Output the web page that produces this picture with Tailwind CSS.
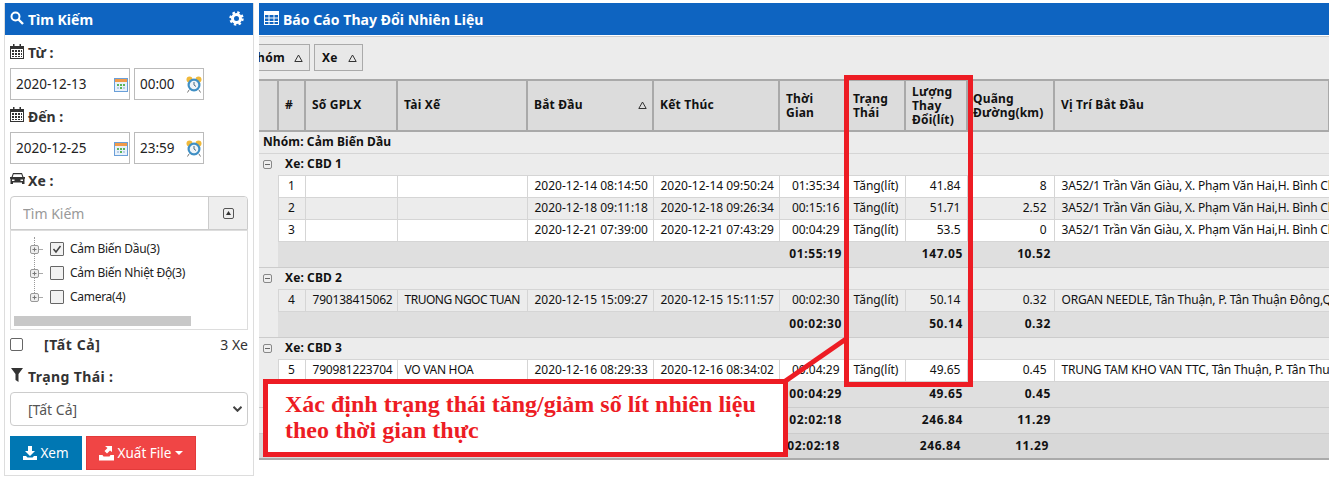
<!DOCTYPE html>
<html lang="vi">
<head>
  <meta charset="UTF-8">
  <title>Báo Cáo Thay Đổi Nhiên Liệu</title>
  <script src="https://cdn.jsdelivr.net/npm/@tailwindcss/browser@4"></script>
</head>
<body class="relative w-[1329px] h-[478px] overflow-hidden bg-white flex font-['Noto_Sans',sans-serif] text-[#333]">

  <!-- search panel -->
  <aside class="ml-[4px] mt-[3px] w-[250px] h-[473px] border-x border-b border-[#ddd] flex flex-col shrink-0">
    <div class="h-[32px] bg-[#0e64c1] text-white flex items-center pl-[5px] pr-[9px] gap-[4px] font-bold text-[14px]">
      <svg class="w-[14px] h-[14px] -mt-[2px]" viewBox="0 0 14 14" fill="none" stroke="white"><circle cx="5.500" cy="5.500" r="4" stroke-width="2"/><path d="M8.500 8.500L13 13" stroke-width="2.400"/></svg>
      <span class="flex-1">Tìm Kiếm</span>
      <svg class="w-[15px] h-[15px] -mt-[2px]" viewBox="0 0 15 15" fill="none" stroke="white"><circle cx="7.500" cy="7.500" r="4" stroke-width="3"/><circle cx="7.500" cy="7.500" r="6" stroke-width="2.400" stroke-dasharray="2.400 2.310"/></svg>
    </div>
    <div class="px-[5px] flex flex-col">
      <label class="h-[33px] pt-[2px] flex items-center gap-[4px] font-bold text-[14px]">
        <svg class="w-[14px] h-[15px] text-[#333] -mt-[3px]" viewBox="0 0 14 15" fill="currentColor"><path d="M3 0h1.500v2h5V0H11v2h3v13H0V2h3zM1 5v9h12V5zM2 6h2v2H2zm3 0h2v2H5zm3 0h2v2H8zm3 0h1v2h-1zM2 9h2v2H2zm3 0h2v2H5zm3 0h2v2H8zm3 0h1v2h-1zM2 12h2v1H2zm3 0h2v1H5zm3 0h2v1H8zm3 0h1v1h-1z"/></svg>
        Từ :
      </label>
      <div class="flex gap-[4px]">
        <div class="relative w-[120px] h-[32px] border border-[#bbb]">
          <input class="w-full h-full pl-[5px] text-[13.5px] text-[#222] outline-none" value="2020-12-13">
          <svg class="absolute right-[1px] top-[9px] w-[14px] h-[14px]" viewBox="0 0 14 14"><rect x="0.500" y="0.500" width="13" height="13" fill="#e8f1fb" stroke="#6a9fd8"/><rect x="1" y="1" width="12" height="3" fill="#f09a4a"/><path d="M3 6h2v2H3zm3 0h2v2H6zM6 9h2v2H6zm3-3h2v2H9z" fill="#5ab55a"/><path d="M3 9h2v2H3zm6 0h2v2H9z" fill="#b8cde6"/></svg>
        </div>
        <div class="relative w-[70px] h-[32px] border border-[#bbb]">
          <input class="w-full h-full pl-[5px] text-[13.5px] text-[#222] outline-none" value="00:00">
          <svg class="absolute right-[1px] top-[7px] w-[16px] h-[17px]" viewBox="0 0 16 17"><circle cx="3.500" cy="3.500" r="3" fill="#f0b93a"/><circle cx="12.500" cy="3.500" r="3" fill="#f0b93a"/><path d="M3 14l-1.500 2.500M13 14l1.500 2.500" stroke="#777"/><circle cx="8" cy="9" r="6.500" fill="#3f8fc4"/><circle cx="8" cy="9" r="4.300" fill="#eef4f8"/><path d="M8 6v3l2 1.500" stroke="#4b6a80" fill="none"/></svg>
        </div>
      </div>
      <label class="h-[32px] flex items-center gap-[4px] font-bold text-[14px]">
        <svg class="w-[14px] h-[15px] text-[#333] -mt-[3px]" viewBox="0 0 14 15" fill="currentColor"><path d="M3 0h1.500v2h5V0H11v2h3v13H0V2h3zM1 5v9h12V5zM2 6h2v2H2zm3 0h2v2H5zm3 0h2v2H8zm3 0h1v2h-1zM2 9h2v2H2zm3 0h2v2H5zm3 0h2v2H8zm3 0h1v2h-1zM2 12h2v1H2zm3 0h2v1H5zm3 0h2v1H8zm3 0h1v1h-1z"/></svg>
        Đến :
      </label>
      <div class="flex gap-[4px]">
        <div class="relative w-[120px] h-[32px] border border-[#bbb]">
          <input class="w-full h-full pl-[5px] text-[13.5px] text-[#222] outline-none" value="2020-12-25">
          <svg class="absolute right-[1px] top-[9px] w-[14px] h-[14px]" viewBox="0 0 14 14"><rect x="0.500" y="0.500" width="13" height="13" fill="#e8f1fb" stroke="#6a9fd8"/><rect x="1" y="1" width="12" height="3" fill="#f09a4a"/><path d="M3 6h2v2H3zm3 0h2v2H6zM6 9h2v2H6zm3-3h2v2H9z" fill="#5ab55a"/><path d="M3 9h2v2H3zm6 0h2v2H9z" fill="#b8cde6"/></svg>
        </div>
        <div class="relative w-[70px] h-[32px] border border-[#bbb]">
          <input class="w-full h-full pl-[5px] text-[13.5px] text-[#222] outline-none" value="23:59">
          <svg class="absolute right-[1px] top-[7px] w-[16px] h-[17px]" viewBox="0 0 16 17"><circle cx="3.500" cy="3.500" r="3" fill="#f0b93a"/><circle cx="12.500" cy="3.500" r="3" fill="#f0b93a"/><path d="M3 14l-1.500 2.500M13 14l1.500 2.500" stroke="#777"/><circle cx="8" cy="9" r="6.500" fill="#3f8fc4"/><circle cx="8" cy="9" r="4.300" fill="#eef4f8"/><path d="M8 6v3l2 1.500" stroke="#4b6a80" fill="none"/></svg>
        </div>
      </div>
      <label class="h-[32px] flex items-center gap-[3px] font-bold text-[14px]">
        <svg class="w-[15px] h-[12px] text-[#333] -mt-[3px]" viewBox="0 0 15 12" fill="currentColor"><path d="M3 0h9l1.500 4H15v1.500l-.5.5v5h-2.500v-1.500H3V11H.5V6L0 5.500V4h1.500zM3.600 1.300L2.700 4h9.600l-.9-2.700zM2 6.500v1.500h2.500V6.500zm8.500 0v1.500H13V6.500z"/></svg>
        Xe :
      </label>
      <div class="flex h-[34px] border border-[#ccc] rounded-t-[4px] overflow-hidden">
        <input class="flex-1 min-w-0 pl-[12px] text-[14px] outline-none placeholder:text-[#999]" placeholder="Tìm Kiếm">
        <button class="w-[39px] bg-[#eee] border-l border-[#ccc] flex items-center justify-center">
          <svg class="w-[11px] h-[11px]" viewBox="0 0 11 11"><rect x="0.500" y="0.500" width="10" height="10" rx="1.500" fill="none" stroke="#555"/><path d="M5.500 3L8 7H3z" fill="#333"/></svg>
        </button>
      </div>
      <div class="relative h-[100px] border border-[#ddd] text-[12px] text-[#222] tracking-[-0.28px]">
        <div class="absolute left-[23px] top-[6px] h-[60px] border-l border-dotted border-[#999]"></div>
        <div class="pt-[6px] flex flex-col">
          <div class="relative h-[24px] flex items-center pl-[39px] gap-[6px]">
            <svg class="absolute left-[19px] top-[8px] w-[14px] h-[9px]" viewBox="0 0 14 9"><rect x="0.500" y="0.500" width="8" height="8" rx="1.500" fill="#eee" stroke="#999"/><path d="M2.500 4.500h4M4.500 2.500v4" stroke="#777"/><path d="M9 4.500h4" stroke="#aaa"/></svg>
            <span class="w-[14px] h-[14px] border border-[#666] rounded-[1px] bg-[#f2f2f2] flex items-center justify-center"><svg class="w-[10px] h-[10px]" viewBox="0 0 10 10" fill="none" stroke="#444" stroke-width="1.500"><path d="M1.500 5l2.500 3 4.500-6"/></svg></span>
            <span>Cảm Biến Dầu(3)</span>
          </div>
          <div class="relative h-[24px] flex items-center pl-[39px] gap-[6px]">
            <svg class="absolute left-[19px] top-[8px] w-[14px] h-[9px]" viewBox="0 0 14 9"><rect x="0.500" y="0.500" width="8" height="8" rx="1.500" fill="#eee" stroke="#999"/><path d="M2.500 4.500h4M4.500 2.500v4" stroke="#777"/><path d="M9 4.500h4" stroke="#aaa"/></svg>
            <span class="w-[14px] h-[14px] border border-[#666] rounded-[1px] bg-[#f2f2f2]"></span>
            <span>Cảm Biến Nhiệt Độ(3)</span>
          </div>
          <div class="relative h-[24px] flex items-center pl-[39px] gap-[6px]">
            <svg class="absolute left-[19px] top-[8px] w-[14px] h-[9px]" viewBox="0 0 14 9"><rect x="0.500" y="0.500" width="8" height="8" rx="1.500" fill="#eee" stroke="#999"/><path d="M2.500 4.500h4M4.500 2.500v4" stroke="#777"/><path d="M9 4.500h4" stroke="#aaa"/></svg>
            <span class="w-[14px] h-[14px] border border-[#666] rounded-[1px] bg-[#f2f2f2]"></span>
            <span>Camera(4)</span>
          </div>
        </div>
        <div class="absolute left-[3px] top-[85px] w-[177px] h-[10px] bg-[#c8c8c8]"></div>
      </div>
      <div class="h-[30px] pb-[2px] flex items-center text-[14px]">
        <span class="w-[13px] h-[13px] border border-[#666] rounded-[2px]"></span>
        <span class="ml-[21px] flex-1 font-bold tracking-[0.6px]">[Tất Cả]</span>
        <span>3 Xe</span>
      </div>
      <label class="h-[32px] flex items-center gap-[5px] pl-[1px] font-bold text-[14px] tracking-[0.4px]">
        <svg class="w-[12px] h-[14px] text-[#333] -mt-[3px]" viewBox="0 0 12 14" fill="currentColor"><path d="M0 0h12L7.500 6v8l-3-2V6z"/></svg>
        Trạng Thái :
      </label>
      <div class="relative h-[34px]">
        <select class="w-full h-full appearance-none border border-[#ccc] rounded-[4px] pl-[17px] text-[14px] text-[#555] outline-none bg-white">
          <option>[Tất Cả]</option>
        </select>
        <svg class="absolute right-[6px] top-[14px] w-[9px] h-[6px]" viewBox="0 0 9 6" fill="none" stroke="#444" stroke-width="2"><path d="M0.500 0.800L4.500 4.800 8.500 0.800"/></svg>
      </div>
      <div class="mt-[10px] flex gap-[4px]">
        <button class="w-[72px] h-[34px] bg-[#0077b3] text-white text-[13.5px] flex items-center justify-center gap-[3px]">
          <svg class="w-[14px] h-[14px]" viewBox="0 0 14 14" fill="white"><path d="M5 0h4v5h3L7 10 2 5h3zM0 10h3l1.500 1.500h5L11 10h3v4H0z"/></svg>
          Xem
        </button>
        <button class="w-[110px] h-[34px] bg-[#f04545] border border-[#e33a3a] text-white text-[13.5px] flex items-center justify-center gap-[4px]">
          <svg class="w-[15px] h-[15px]" viewBox="0 0 15 15" fill="white"><path d="M6 0h7v6l-2-1.500L8 7.500 5.500 5 8.500 2zM0 9h3.500l1 1.500h6l1-1.500H15v5.500H0z"/></svg>
          Xuất File
          <span class="w-0 h-0 border-x-[4px] border-x-transparent border-t-[4px] border-t-white"></span>
        </button>
      </div>
    </div>
  </aside>

  <!-- report panel -->
  <main class="ml-[5px] mt-[3px] flex-1 min-w-0 overflow-hidden text-[#111]">
    <div class="h-[32px] bg-[#0e64c1] text-white flex items-center pl-[5px] gap-[4px] font-bold text-[14px] tracking-[0.05px]">
      <svg class="w-[15px] h-[14px] -mt-[2px]" viewBox="0 0 15 14" fill="none" stroke="white"><rect x="0.500" y="0.500" width="14" height="13"/><path d="M0 3.500h15M0 7h15M0 10.500h15M5 3.500V14M10 3.500V14" stroke-width="1"/><rect x="0.500" y="0.500" width="14" height="3" fill="white"/></svg>
      Báo Cáo Thay Đổi Nhiên Liệu
    </div>
    <div class="h-[43px] mt-[1px] bg-[#ececec] border-t border-[#ccc] flex items-start pt-[7px] gap-[4px] font-bold text-[12px] tracking-[0.3px]">
      <span class="-ml-[20px] w-[71px] h-[27px] border border-[#aaa] bg-[#e8e8e8] flex items-center justify-end pr-[6px] gap-[9px]">Nhóm
        <svg class="w-[9px] h-[8px]" viewBox="0 0 9 8" fill="none" stroke="#333"><path d="M4.500 1L8.200 7.500H0.800z"/></svg></span>
      <span class="w-[49px] h-[27px] border border-[#aaa] bg-[#e8e8e8] flex items-center pl-[7px] gap-[10px]">Xe
        <svg class="w-[9px] h-[8px]" viewBox="0 0 9 8" fill="none" stroke="#333"><path d="M4.500 1L8.200 7.500H0.800z"/></svg></span>
    </div>

    <table class="table-fixed border-collapse w-[1070px] text-[12px] [&_td]:overflow-hidden [&_td]:whitespace-nowrap [&_th]:overflow-hidden">
      <colgroup>
        <col class="w-[19px]"><col class="w-[27px]"><col class="w-[92px]"><col class="w-[130px]"><col class="w-[126px]"><col class="w-[126px]"><col class="w-[68px]"><col class="w-[58px]"><col class="w-[62px]"><col class="w-[87px]"><col class="w-[275px]">
      </colgroup>
      <thead>
        <tr class="h-[51px] bg-[#dcdcdc] font-bold text-left leading-[14px] tracking-[0.2px] [&>th]:border-[2px] [&>th]:border-[#a9a9a9] [&>th]:pl-[6px] [&>th]:pb-[2px] [&>th]:font-bold">
          <th class="!border-l-0"></th>
          <th>#</th>
          <th>Số GPLX</th>
          <th>Tài Xế</th>
          <th>
            <div class="flex items-center justify-between pr-[5px]">Bắt Đầu
              <svg class="w-[9px] h-[8px]" viewBox="0 0 9 8" fill="none" stroke="#333"><path d="M4.500 1L8.200 7.500H0.800z"/></svg>
            </div>
          </th>
          <th>Kết Thúc</th>
          <th class="!pb-0">Thời<br>Gian</th>
          <th class="!pl-[5px] !pb-0">Trạng<br>Thái</th>
          <th class="!pb-0">Lượng<br>Thay<br>Đổi(lít)</th>
          <th class="!pl-[5px] !pb-0">Quãng<br>Đường(km)</th>
          <th>Vị Trí Bắt Đầu</th>
        </tr>
      </thead>
      <tbody>
        <tr class="h-[22px] bg-[#ececec] font-bold border-b border-[#d5d5d5]">
          <td colspan="11" class="pl-[4px] tracking-[0.1px]">Nhóm: Cảm Biến Dầu</td>
        </tr>

        <tr class="h-[22px] bg-[#ececec] font-bold">
          <td class="pl-[4px]"><svg class="w-[9px] h-[9px]" viewBox="0 0 9 9"><rect x="0.500" y="0.500" width="8" height="8" rx="1.500" fill="#eee" stroke="#888"/><path d="M2 4.500h5" stroke="#666"/></svg></td>
          <td colspan="10" class="pl-[7px] tracking-[0.1px]">Xe: CBD 1</td>
        </tr>
        <tr class="h-[22px] bg-white [&>td]:border [&>td]:border-[#d5d5d5] [&>td]:px-[7px]">
          <td class="!bg-[#ececec] !border-0"></td><td class="text-center">1</td><td></td><td></td><td>2020-12-14 08:14:50</td><td>2020-12-14 09:50:24</td><td class="text-right">01:35:34</td><td class="!pl-[6px]">Tăng(lít)</td><td class="text-right !pr-[6px]">41.84</td><td class="text-right">8</td><td class="!pr-0 tracking-[-0.17px]">3A52/1 Trần Văn Giàu, X. Phạm Văn Hai,H. Bình Chánh</td>
        </tr>
        <tr class="h-[22px] bg-[#ececec] [&>td]:border [&>td]:border-[#d5d5d5] [&>td]:px-[7px]">
          <td class="!border-0"></td><td class="text-center">2</td><td></td><td></td><td>2020-12-18 09:11:18</td><td>2020-12-18 09:26:34</td><td class="text-right">00:15:16</td><td class="!pl-[6px]">Tăng(lít)</td><td class="text-right !pr-[6px]">51.71</td><td class="text-right">2.52</td><td class="!pr-0 tracking-[-0.17px]">3A52/1 Trần Văn Giàu, X. Phạm Văn Hai,H. Bình Chánh</td>
        </tr>
        <tr class="h-[22px] bg-white [&>td]:border [&>td]:border-[#d5d5d5] [&>td]:px-[7px]">
          <td class="!bg-[#ececec] !border-0"></td><td class="text-center">3</td><td></td><td></td><td>2020-12-21 07:39:00</td><td>2020-12-21 07:43:29</td><td class="text-right">00:04:29</td><td class="!pl-[6px]">Tăng(lít)</td><td class="text-right !pr-[6px]">53.5</td><td class="text-right">0</td><td class="!pr-0 tracking-[-0.17px]">3A52/1 Trần Văn Giàu, X. Phạm Văn Hai,H. Bình Chánh</td>
        </tr>
        <tr class="h-[26px] bg-[#dfdfdf] font-bold tracking-[0.6px] border-b border-[#ccc] [&>td]:pr-[3px]">
          <td class="bg-[#ececec]"></td><td colspan="5"></td><td class="text-right !pr-[5px]">01:55:19</td><td></td><td class="text-right !pr-[4px]">147.05</td><td class="text-right">10.52</td><td></td>
        </tr>

        <tr class="h-[22px] bg-[#ececec] font-bold">
          <td class="pl-[4px]"><svg class="w-[9px] h-[9px]" viewBox="0 0 9 9"><rect x="0.500" y="0.500" width="8" height="8" rx="1.500" fill="#eee" stroke="#888"/><path d="M2 4.500h5" stroke="#666"/></svg></td>
          <td colspan="10" class="pl-[7px] tracking-[0.1px]">Xe: CBD 2</td>
        </tr>
        <tr class="h-[22px] bg-[#ececec] [&>td]:border [&>td]:border-[#d5d5d5] [&>td]:px-[7px]">
          <td class="!border-0"></td><td class="text-center">4</td><td class="tracking-[-0.2px]">790138415062</td><td class="tracking-[-0.5px]">TRUONG NGOC TUAN</td><td>2020-12-15 15:09:27</td><td>2020-12-15 15:11:57</td><td class="text-right">00:02:30</td><td class="!pl-[6px]">Tăng(lít)</td><td class="text-right !pr-[6px]">50.14</td><td class="text-right">0.32</td><td class="!pr-0 tracking-[-0.17px]">ORGAN NEEDLE, Tân Thuận, P. Tân Thuận Đông,Quận 7</td>
        </tr>
        <tr class="h-[26px] bg-[#dfdfdf] font-bold tracking-[0.6px] border-b border-[#ccc] [&>td]:pr-[3px]">
          <td class="bg-[#ececec]"></td><td colspan="5"></td><td class="text-right !pr-[5px]">00:02:30</td><td></td><td class="text-right !pr-[4px]">50.14</td><td class="text-right">0.32</td><td></td>
        </tr>

        <tr class="h-[22px] bg-[#ececec] font-bold">
          <td class="pl-[4px]"><svg class="w-[9px] h-[9px]" viewBox="0 0 9 9"><rect x="0.500" y="0.500" width="8" height="8" rx="1.500" fill="#eee" stroke="#888"/><path d="M2 4.500h5" stroke="#666"/></svg></td>
          <td colspan="10" class="pl-[7px] tracking-[0.1px]">Xe: CBD 3</td>
        </tr>
        <tr class="h-[22px] bg-white [&>td]:border [&>td]:border-[#d5d5d5] [&>td]:px-[7px]">
          <td class="!bg-[#ececec] !border-0"></td><td class="text-center">5</td><td class="tracking-[-0.2px]">790981223704</td><td class="tracking-[-0.3px]">VO VAN HOA</td><td>2020-12-16 08:29:33</td><td>2020-12-16 08:34:02</td><td class="text-right">00:04:29</td><td class="!pl-[6px]">Tăng(lít)</td><td class="text-right !pr-[6px]">49.65</td><td class="text-right">0.45</td><td class="!pr-0 tracking-[-0.17px]">TRUNG TAM KHO VAN TTC, Tân Thuận, P. Tân Thuận Đông</td>
        </tr>
        <tr class="h-[26px] bg-[#dfdfdf] font-bold tracking-[0.6px] border-b border-[#ccc] [&>td]:pr-[3px]">
          <td class="bg-[#ececec]"></td><td colspan="5"></td><td class="text-right !pr-[5px]">00:04:29</td><td></td><td class="text-right !pr-[4px]">49.65</td><td class="text-right">0.45</td><td></td>
        </tr>
        <tr class="h-[26px] bg-[#dfdfdf] font-bold tracking-[0.6px] border-b border-[#ccc] [&>td]:pr-[3px]">
          <td class="bg-[#ececec]"></td><td colspan="5"></td><td class="text-right !pr-[5px]">02:02:18</td><td></td><td class="text-right !pr-[4px]">246.84</td><td class="text-right">11.29</td><td></td>
        </tr>
        <tr class="h-[26px] bg-[#d8d8d8] font-bold tracking-[0.6px] border-b-[2px] border-[#aaa] [&>td]:pr-[5px]">
          <td></td><td colspan="5"></td><td class="text-right !pr-[7px]">02:02:18</td><td></td><td class="text-right !pr-[6px]">246.84</td><td class="text-right">11.29</td><td></td>
        </tr>
      </tbody>
    </table>
  </main>

  <!-- red annotation drawn over the report -->
  <div class="absolute left-[844px] top-[75px] w-[129px] h-[312px] border-[5px] border-[#ed1c24]"></div>
  <svg class="absolute left-[780px] top-[335px] w-[70px] h-[50px]" viewBox="0 0 70 50"><path d="M4 47L66 4" stroke="#ed1c24" stroke-width="5"/></svg>
  <div class="absolute left-[263px] top-[379px] w-[525px] h-[78px] border-[5px] border-[#ed1c24] bg-white pl-[17px] pt-[7px] font-['Liberation_Serif',serif] font-bold text-[24px] leading-[26px] text-[#ed1c24]">
    Xác định trạng thái tăng/giảm số lít nhiên liệu<br>theo thời gian thực
  </div>
</body>
</html>
